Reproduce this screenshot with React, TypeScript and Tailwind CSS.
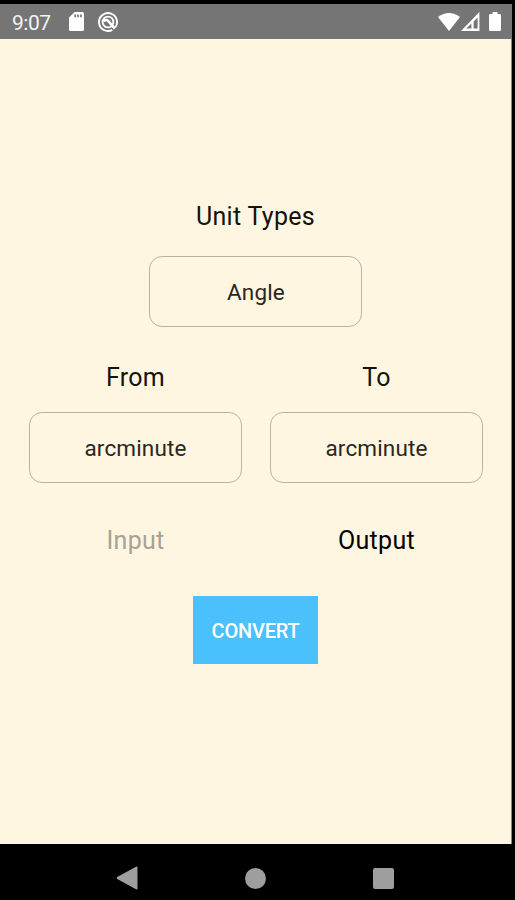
import { useState } from 'react'

function StatusBar() {
  return (
    <header className="flex h-[35px] items-center justify-between bg-[#757575] pl-3 pr-[11px] text-white">
      <div className="flex items-center">
        <span className="w-[57px] pt-[3px] text-[21px] leading-none tracking-[-0.5px] text-[#f2f2f2]">9:07</span>
        <svg width="15" height="19" viewBox="0 0 15 19" fill="currentColor">
          <path
            fillRule="evenodd"
            d="M5.6 0H13.4Q15 0 15 1.6V17.4Q15 19 13.4 19H1.6Q0 19 0 17.4V5.6ZM5.3 2.6V5.2H7V2.6ZM8.2 2.6V5.2H9.9V2.6ZM11.1 2.6V5.2H12.8V2.6Z"
          />
        </svg>
        <svg className="ml-[14px]" width="20" height="20" viewBox="0 0 20 20" fill="none" stroke="currentColor">
          <path d="M17.2 15.4A9 9 0 1 0 14.3 17.9" strokeWidth="1.9" />
          <circle cx="10" cy="10" r="5.4" strokeWidth="1.9" />
          <path d="M5.6 9.4Q8.4 6.4 10.4 9.2L16.8 16.6" strokeWidth="2.6" />
        </svg>
      </div>

      <div className="flex items-center">
        <svg width="22" height="18" viewBox="0 0 22 18" fill="currentColor">
          <path d="M0 4Q11-4 22 4L11 18Z" />
        </svg>
        <svg className="ml-[1px]" width="19" height="19" viewBox="0 0 19 19">
          <path
            fill="currentColor"
            fillRule="evenodd"
            d="M18.4 0V19H0ZM16.6 5.4L12.6 9.4V16.6H16.6ZM10.4 11.4L5.2 16.6H10.4Z"
          />
        </svg>
        <svg className="ml-[9px]" width="12" height="19" viewBox="0 0 12 19" fill="currentColor">
          <path d="M3.6 0H8.4V2H10.8Q12 2 12 3.2V17.8Q12 19 10.8 19H1.2Q0 19 0 17.8V3.2Q0 2 1.2 2H3.6Z" />
        </svg>
      </div>
    </header>
  )
}

function NavigationBar() {
  return (
    <nav className="flex h-14 w-[511px] items-center justify-center pt-3 text-[#9e9e9e]">
      <div className="flex w-[128px] justify-center pr-[2px]">
        <svg width="22" height="24" viewBox="0 0 22 24" fill="currentColor">
          <path d="M20 .7Q21.5 0 21.5 1.4V22.6Q21.5 24 20 23.3L1.2 12.9Q0 12 1.2 11.1Z" />
        </svg>
      </div>
      <div className="flex w-[128px] justify-center">
        <span className="size-[21px] rounded-full bg-[#9e9e9e]" />
      </div>
      <div className="flex w-[128px] justify-center">
        <span className="size-[21px] rounded-[2px] bg-[#9e9e9e]" />
      </div>
    </nav>
  )
}

function PickerButton({ value }: { value: string }) {
  return (
    <button
      type="button"
      className="h-[71px] w-[213px] rounded-[13px] border border-[#b9b3a2] pl-px pt-[2px] text-[22.5px] tracking-[0.15px] text-[#2a2720]"
    >
      {value}
    </button>
  )
}

function UnitPicker({ label, value }: { label: string; value: string }) {
  return (
    <div className="flex w-[213px] flex-col items-center gap-[19px]">
      <span className="pl-px text-[25px] leading-[30px] tracking-[0.3px] text-[#14120d]">{label}</span>
      <PickerButton value={value} />
    </div>
  )
}

export default function App() {
  const [input, setInput] = useState('')

  return (
    <div className="h-[900px] w-[515px] overflow-hidden bg-black pt-1 font-['Roboto',sans-serif]">
      <div className="w-[512px]">
        <StatusBar />
        <main className="flex h-[805px] flex-col items-center border-r border-[#8d887c] bg-[#fff6e2] pt-[163px]">
          <span className="mb-6 text-[25px] leading-[30px] tracking-[0.3px] text-[#14120d]">Unit Types</span>
          <PickerButton value="Angle" />

          <div className="mt-[36px] flex gap-7">
            <UnitPicker label="From" value="arcminute" />
            <UnitPicker label="To" value="arcminute" />
          </div>

          <div className="mt-[43px] flex gap-7 text-[25px] leading-[30px] tracking-[0.3px]">
            <input
              value={input}
              onChange={(event) => setInput(event.target.value)}
              placeholder="Input"
              className="h-[30px] w-[213px] bg-transparent pl-px text-center text-[#14120d] outline-none placeholder:text-[#a8a293]"
            />
            <span className="w-[213px] pl-px text-center text-black">Output</span>
          </div>

          <button
            type="button"
            className="mt-[40px] h-[68px] w-[125px] bg-[#4ac0fc] pt-[2px] text-[20px] font-medium tracking-[-0.2px] text-white"
          >
            CONVERT
          </button>
        </main>
      </div>
      <NavigationBar />
    </div>
  )
}
